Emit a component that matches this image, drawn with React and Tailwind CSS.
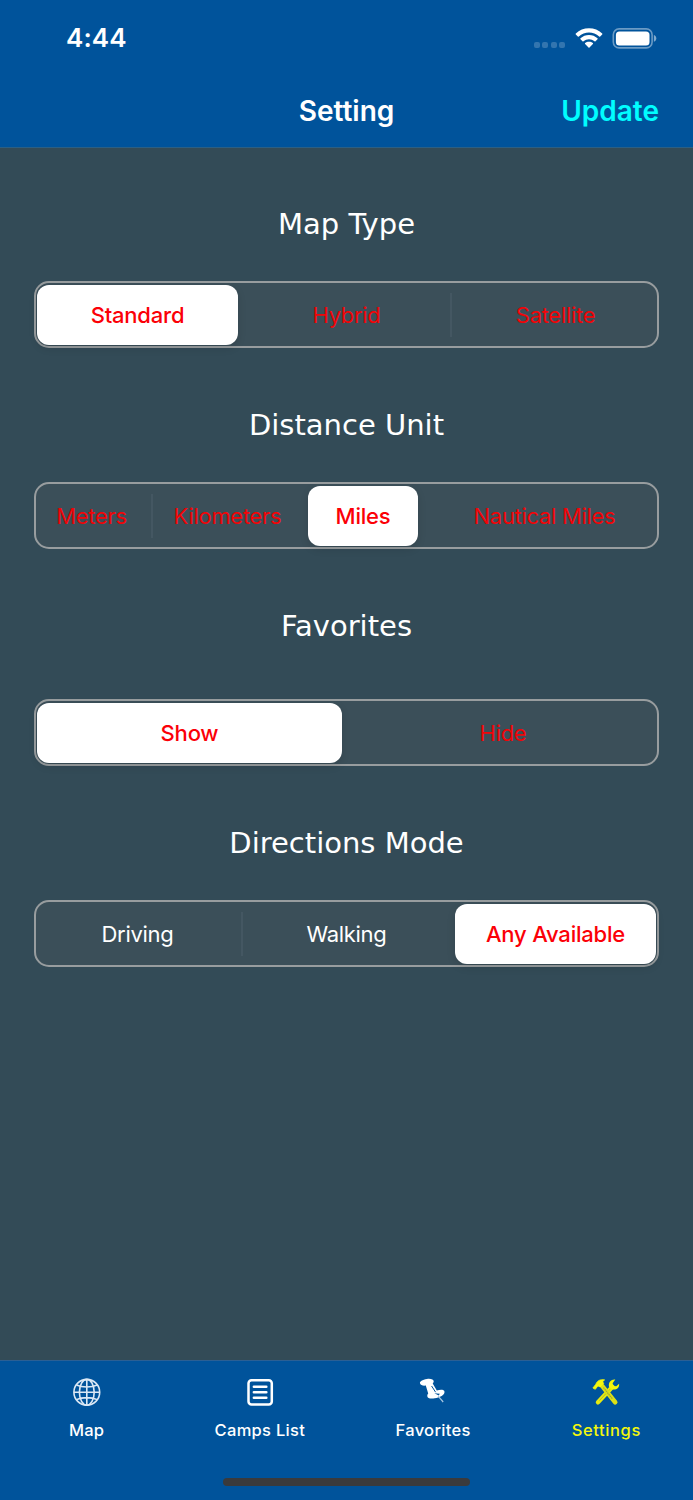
import { useState } from 'react';
import clsx from 'clsx';

const SECTIONS = [
  {
    id: 'map-type',
    title: 'Map Type',
    spacing: 'mt-[39px]',
    initial: 0,
    idleText: 'text-[#f00508]',
    segments: [
      { label: 'Standard', width: 'w-[201px]' },
      { label: 'Hybrid', width: 'w-[201px]' },
      { label: 'Satellite', width: 'w-[201px]' },
    ],
  },
  {
    id: 'distance-unit',
    title: 'Distance Unit',
    spacing: 'mt-[39px]',
    initial: 2,
    idleText: 'text-[#f00508]',
    segments: [
      { label: 'Meters', width: 'w-[111px] pr-[2px]' },
      { label: 'Kilometers', width: 'w-[144px] pr-[1px]' },
      { label: 'Miles', width: 'w-[110px]' },
      { label: 'Nautical Miles', width: 'w-[230px] pl-[7px]' },
    ],
  },
  {
    id: 'favorites',
    title: 'Favorites',
    spacing: 'mt-[55px]',
    initial: 0,
    idleText: 'text-[#f00508]',
    segments: [
      { label: 'Show', width: 'w-[305px]' },
      { label: 'Hide', width: 'w-[306px]' },
    ],
  },
  {
    id: 'directions',
    title: 'Directions Mode',
    spacing: 'mt-[39px]',
    initial: 2,
    idleText: 'text-white',
    segments: [
      { label: 'Driving', width: 'w-[201px]' },
      { label: 'Walking', width: 'w-[201px]' },
      { label: 'Any Available', width: 'w-[201px]' },
    ],
  },
];

function WifiIcon() {
  return (
    <svg width="28" height="21" viewBox="0 0 28 21" fill="#fff">
      <path d="M14 .3C19 .3 23.700 2.200 27.200 5.500C27.500 5.800 27.500 6.200 27.200 6.500L25.200 8.500C24.900 8.800 24.500 8.800 24.200 8.500C18.500 3.200 9.500 3.200 3.800 8.500C3.500 8.800 3.100 8.800 2.800 8.500L.8 6.500C.5 6.200 .5 5.800 .8 5.500C4.300 2.200 9 .3 14 .3Z" />
      <path d="M14 7C17.200 7 20.200 8.200 22.500 10.300C22.800 10.600 22.800 11 22.500 11.300L20.500 13.300C20.200 13.600 19.800 13.600 19.500 13.300C16.400 10.600 11.600 10.600 8.500 13.300C8.200 13.600 7.800 13.600 7.500 13.300L5.500 11.300C5.200 11 5.200 10.600 5.500 10.300C7.800 8.200 10.800 7 14 7Z" />
      <path d="M14 13.700C15.500 13.700 16.800 14.200 17.900 15.100C18.200 15.400 18.200 15.800 17.900 16.100L14.500 19.600C14.200 19.900 13.800 19.900 13.500 19.600L10.100 16.100C9.800 15.800 9.800 15.400 10.100 15.100C11.200 14.200 12.500 13.700 14 13.700Z" />
    </svg>
  );
}

function BatteryIcon() {
  return (
    <svg width="45" height="21" viewBox="0 0 45 21" fill="none">
      <rect x="1.300" y=".9" width="38.800" height="19" rx="5.800" stroke="#fff" strokeOpacity=".42" strokeWidth="1.600" />
      <rect x="3.900" y="3.400" width="33.600" height="14" rx="3.500" fill="#fff" />
      <path d="M41.900 7.100C43.400 7.700 44.300 9 44.300 10.400S43.400 13.100 41.900 13.700Z" fill="#fff" fillOpacity=".5" />
    </svg>
  );
}

function GlobeIcon() {
  return (
    <svg width="30" height="30" viewBox="0 0 30 30" fill="none" stroke="#dbe8f5" strokeWidth="1.600">
      <circle cx="14.800" cy="15.300" r="12.900" />
      <ellipse cx="14.800" cy="15.300" rx="7.400" ry="12.900" />
      <path d="M14.800 2.400V28.200M2 15.300H27.700M4.500 8C10 10.700 19.600 10.700 25.200 8M4.500 22.600C10 19.900 19.600 19.900 25.200 22.600" />
    </svg>
  );
}

function ListIcon() {
  return (
    <svg width="30" height="30" viewBox="0 0 30 30" fill="none" stroke="#fff">
      <rect x="3.500" y="3.200" width="23.300" height="24.200" rx="3" strokeWidth="2.500" />
      <path d="M8.900 9.700H21.300M8.900 15.200H21.300M8.900 20.700H21.300" strokeWidth="2.600" strokeLinecap="round" />
    </svg>
  );
}

function PinIcon() {
  return (
    <svg width="30" height="30" viewBox="0 0 30 30" fill="#fff">
      <path d="M2.100 6.600C1.200 4.300 4.500 2.600 9 1.900C13 1.400 15.700 2.500 15.700 4.300C15.700 5.400 15.200 6 14.700 6.600L18.800 13.600C22.500 12.400 26.300 12.600 26.500 14.700C26.600 17.600 23.600 19.400 20.100 20.500C15.200 21.900 9.500 22.300 9.300 19.200C9.200 18 9.700 17.300 10.200 16.600L7.800 8.600C4.800 9 2.700 8.200 2.100 6.600Z" />
      <path d="M13.600 9L17.600 15.200" fill="none" stroke="#00539b" strokeWidth="1" />
      <path d="M16.400 16.200L20.800 18.600L21.800 16.800Z" fill="#00539b" />
      <path d="M20.200 19.200L25.200 25" stroke="#a9c8e2" strokeWidth="1.200" />
    </svg>
  );
}

function ToolsIcon() {
  return (
    <svg width="30" height="30" viewBox="0 0 30 30">
      <path d="M21.500 9.800L7 25.300" stroke="#e6ea10" strokeWidth="4.400" strokeLinecap="round" />
      <path d="M19 12.200L8.500 23.500" stroke="#aab632" strokeWidth="1" />
      <path d="M24.300 2.600L21.600 6.300L22.500 9L25.300 9.200L28.100 6.700C28.600 10.500 25.700 13 21.700 12.500L18 9.700C17.200 5.200 20.400 2 24.300 2.600Z" fill="#f4f70b" />
      <path d="M10.700 8.400L24.200 25.200" stroke="#dce016" strokeWidth="4.600" strokeLinecap="round" />
      <path d="M12.500 10.600L21.300 21.700" stroke="#93a142" strokeWidth="1.200" strokeDasharray="1.400 .7" />
      <path d="M1.900 11L4.800 7.300C6.100 3.800 9.200 2 13.600 2.900C11.500 3.600 11.500 4.900 12.700 6.300L9.200 9.900L6.900 8.900L4.300 12.300Z" fill="#f4f70b" stroke="#f4f70b" strokeLinejoin="round" strokeWidth=".8" />
    </svg>
  );
}

const TABS = [
  { label: 'Map', Icon: GlobeIcon, tracking: 'tracking-[0.2px]' },
  { label: 'Camps List', Icon: ListIcon, tracking: 'tracking-[0.300px]' },
  { label: 'Favorites', Icon: PinIcon, tracking: 'tracking-[0.300px]' },
  { label: 'Settings', Icon: ToolsIcon, tracking: 'tracking-[0.600px]' },
];

function StatusBar() {
  return (
    <div className="flex h-[76px] items-center justify-between pr-[36px] pl-[66px]">
      <span className="text-[26px] leading-8 font-semibold tracking-[0.1px]">4:44</span>
      <div className="flex items-center">
        <div className="mt-[13px] mr-[10px] flex gap-[2.500px]">
          {[0, 1, 2, 3].map((dot) => (
            <span key={dot} className="size-[6px] rounded-[2px] bg-white/20" />
          ))}
        </div>
        <WifiIcon />
        <div className="ml-[9px]">
          <BatteryIcon />
        </div>
      </div>
    </div>
  );
}

function NavBar() {
  return (
    <div className="grid h-[69px] grid-cols-3 items-center px-[34px]">
      <h1 className="col-start-2 text-center text-[28px] leading-9 font-semibold">Setting</h1>
      <button type="button" className="text-right text-[28px] leading-9 font-semibold text-[#00fdff]">
        Update
      </button>
    </div>
  );
}

function SegmentedControl({ segments, initial, idleText }) {
  const [selected, setSelected] = useState(initial);

  return (
    <div className="flex h-[67px] items-start rounded-[15px] border-2 border-[#989d9f] bg-[#3b4f59] px-px pt-[2px]">
      {segments.map((segment, index) => {
        const active = index === selected;
        const nextToActive = active || index + 1 === selected;
        return (
          <div key={segment.label} className="flex items-center">
            <button
              type="button"
              onClick={() => setSelected(index)}
              className={clsx(
                'h-[60px] rounded-[12px] text-center text-[22px] whitespace-nowrap',
                segment.width,
                active
                  ? 'bg-white font-medium tracking-[-0.2px] text-[#fb0007] shadow-[0_3px_8px_rgba(0,0,0,0.12)]'
                  : clsx('tracking-[-0.3px]', idleText),
              )}
            >
              {segment.label}
            </button>
            {index < segments.length - 1 && (
              <span className={clsx('mx-[3px] h-[44px] w-[2px]', !nextToActive && 'bg-[#445762]')} />
            )}
          </div>
        );
      })}
    </div>
  );
}

function Section({ section }) {
  return (
    <section>
      <h2 className="text-center font-['DejaVu_Sans',Verdana,sans-serif] text-[29px] leading-9 text-white">
        {section.title}
      </h2>
      <div className={section.spacing}>
        <SegmentedControl {...section} />
      </div>
    </section>
  );
}

function TabBar() {
  return (
    <footer className="h-[140px] border-t border-[#2b5f94] bg-[#00539b]">
      <nav className="grid grid-cols-4 pt-[16px]">
        {TABS.map(({ label, Icon, tracking }) => (
          <button
            key={label}
            type="button"
            className={clsx(
              'flex flex-col items-center gap-[11px] text-[16.500px] leading-6 font-medium',
              tracking,
              label === 'Settings' ? 'text-[#f4f70b]' : 'text-white',
            )}
          >
            <Icon />
            {label}
          </button>
        ))}
      </nav>
      <div className="mx-auto mt-[36px] h-[8px] w-[247px] rounded-full bg-[#3a3a3c]" />
    </footer>
  );
}

export default function App() {
  return (
    <div className="flex h-[1500px] w-[693px] flex-col bg-[#334b57] font-['Inter',sans-serif] text-white">
      <header className="h-[148px] border-b border-[#2b5f84] bg-[#00539b]">
        <StatusBar />
        <NavBar />
      </header>
      <main className="flex flex-1 flex-col gap-[59px] px-[34px] pt-[58px]">
        {SECTIONS.map((section) => (
          <Section key={section.id} section={section} />
        ))}
      </main>
      <TabBar />
    </div>
  );
}
